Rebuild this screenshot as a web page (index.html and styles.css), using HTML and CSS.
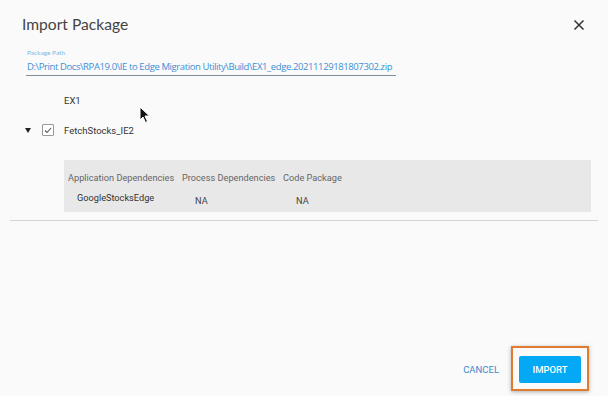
FILE: index.html
```html
<!DOCTYPE html>
<html>
<head>
<meta charset="utf-8">
<link rel="stylesheet" href="styles.css">
</head>
<body>
<div class="dialog">
  <div class="header">
    <h1 class="title">Import Package</h1>
    <svg class="close" width="12" height="12" viewBox="0 0 12 12"><path d="M1.5 1.5L10.5 10.5M10.5 1.5L1.5 10.5" stroke="#333" stroke-width="1.5" fill="none"/></svg>
  </div>
  <div class="field">
    <div class="field-label">Package Path</div>
    <div class="field-value">D:\Print Docs\RPA19.0\IE to Edge Migration Utility\Build\EX1_edge.20211129181807302.zip</div>
  </div>
  <div class="tree">
    <div class="root">EX1</div>
    <div class="node">
      <span class="caret"></span>
      <span class="check"><svg width="8" height="7" viewBox="0 0 8 7"><path d="M1 3.5L3 5.5L7 1" stroke="#555" stroke-width="1.1" fill="none"/></svg></span>
      <span class="node-name">FetchStocks_IE2</span>
    </div>
    <div class="deps">
      <div class="col col-app">
        <div class="head">Application Dependencies</div>
        <div class="val val-app">GoogleStocksEdge</div>
      </div>
      <div class="col col-proc">
        <div class="head">Process Dependencies</div>
        <div class="val">NA</div>
      </div>
      <div class="col col-code">
        <div class="head">Code Package</div>
        <div class="val">NA</div>
      </div>
    </div>
  </div>
  <div class="divider"></div>
  <div class="spacer"></div>
  <div class="footer">
    <button class="btn-cancel">CANCEL</button>
    <div class="highlight"><button class="btn-import">IMPORT</button></div>
  </div>
  <svg class="cursor" width="12" height="18" viewBox="0 0 12 18"><path d="M1 1L1 14L4 11L6.5 16.5L8.5 15.5L6 10L10.5 10Z" fill="#111" stroke="#fff" stroke-width="1"/></svg>
</div>
</body>
</html>
```
FILE: styles.css
```css
html, body {
  margin: 0;
  padding: 0;
  background: #fafafa;
}
body {
  width: 608px;
  height: 396px;
  overflow: hidden;
  font-family: Roboto, "Liberation Sans", sans-serif;
}
.dialog {
  position: relative;
  height: 396px;
  display: flex;
  flex-direction: column;
}
.header {
  display: flex;
  justify-content: space-between;
  align-items: center;
  padding: 11px 23px 0 22px;
  height: 26px;
}
.title {
  margin: 0;
  font-family: Lato, "Open Sans", sans-serif;
  font-weight: 400;
  font-size: 15.6px;
  color: #444;
}
.close {
  display: block;
  margin-top: 1px;
}
.field {
  margin: 11px 0 0 26px;
  width: 370px;
}
.field-label {
  font-family: Lato, "Open Sans", sans-serif;
  font-size: 6.5px;
  color: #7ab8e4;
  line-height: 9px;
  padding-left: 1px;
}
.field-value {
  font-family: "Open Sans", "Noto Sans", sans-serif;
  font-size: 9.5px;
  letter-spacing: -0.4px;
  color: #3d8fd6;
  line-height: 14px;
  padding: 3px 0 1px 1px;
  border-bottom: 1px solid #7f8c99;
  white-space: nowrap;
}
.tree {
  margin-top: 19px;
}
.root {
  padding-left: 64px;
  font-size: 9.5px;
  color: #333;
  line-height: 12px;
}
.node {
  display: flex;
  align-items: center;
  margin-top: 16px;
  height: 14px;
}
.caret {
  width: 0;
  height: 0;
  margin-left: 25px;
  border-left: 3px solid transparent;
  border-right: 3px solid transparent;
  border-top: 5px solid #222;
}
.check {
  margin-left: 11px;
  width: 10px;
  height: 10px;
  border: 1px solid #999;
  border-radius: 1px;
  background: #fff;
  display: flex;
  align-items: center;
  justify-content: center;
}
.node-name {
  margin-left: 10px;
  font-size: 9.5px;
  color: #333;
}
.deps {
  margin: 23px 17px 0 64px;
  height: 52px;
  background: #e8e8e8;
  display: flex;
  padding-left: 4px;
  box-sizing: border-box;
}
.col {
  padding-top: 12px;
}
.head {
  font-size: 9.2px;
  color: #666;
  line-height: 12px;
  white-space: nowrap;
}
.col-app { width: 114px; }
.col-proc { width: 101px; }
.val {
  font-size: 9.2px;
  color: #444;
  margin-top: 11px;
  padding-left: 13px;
}
.val-app {
  margin-top: 8px;
  padding-left: 9px;
  color: #333;
}
.divider {
  margin: 8px 10px 0 10px;
  height: 1px;
  background: #d4d4d4;
}
.spacer {
  flex: 1;
}
.footer {
  display: flex;
  justify-content: flex-end;
  align-items: center;
  padding: 0 19px 5px 0;
}
.btn-cancel {
  border: none;
  background: none;
  font-family: Roboto, sans-serif;
  font-size: 9.5px;
  font-weight: 400;
  color: #3d8acc;
  margin-right: 12px;
  margin-top: 2px;
  padding: 0;
}
.highlight {
  border: 2px solid #e07c30;
  padding: 8px 6px 6px 6px;
  box-shadow: 0 1px 4px rgba(0,0,0,0.3);
}
.btn-import {
  display: block;
  border: none;
  background: #03a9f4;
  color: #fff;
  font-family: Roboto, sans-serif;
  font-size: 9.5px;
  font-weight: 500;
  width: 62px;
  height: 27px;
  border-radius: 2px;
  padding: 0;
}
.cursor {
  position: absolute;
  left: 139px;
  top: 106px;
}
```
